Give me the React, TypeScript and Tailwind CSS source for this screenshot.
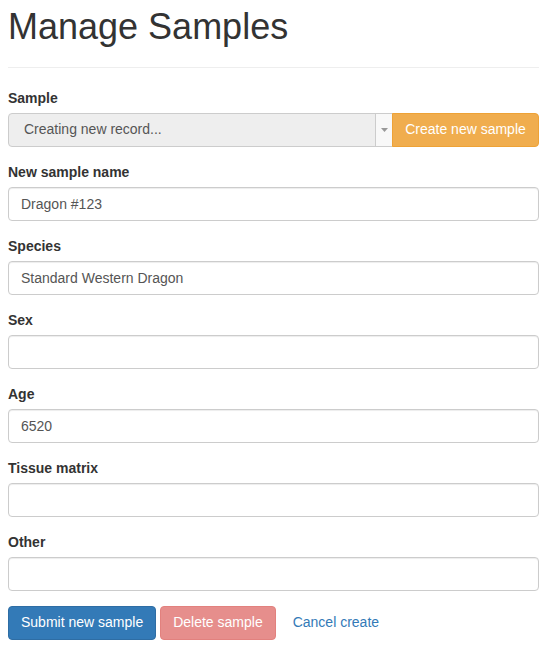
import React from "react";

const font = { fontFamily: '"Liberation Sans", Arial, sans-serif' };

function Field({ label, value }: { label: string; value: string }) {
  return (
    <div className="mb-[15px]">
      <label className="block mb-[5px] text-[14px] leading-[20px] font-bold text-[#333]">{label}</label>
      <input
        readOnly
        value={value}
        className="block w-full h-[34px] px-[12px] py-[6px] text-[14px] leading-[20px] text-[#555] bg-white border border-[#ccc] rounded-[4px] shadow-[inset_0_1px_1px_rgba(0,0,0,0.075)] outline-none"
        style={font}
      />
    </div>
  );
}

export default function App() {
  return (
    <div className="pl-2 pr-[9px] bg-white min-h-[648px]" style={font}>
      <div className="pb-[20px] border-b border-[#eee]">
        <h1 className="mt-[7px] text-[36px] leading-[1.1] font-medium text-[#333]">Manage Samples</h1>
      </div>
      <div className="mt-[20px]">
        <div className="mb-[15px]">
          <label className="block mb-[5px] text-[14px] leading-[20px] font-bold text-[#333]">Sample</label>
          <div className="flex h-[34px]">
            <div className="flex flex-1 min-w-0 bg-[#eee] border border-[#ccc] rounded-l-[4px]">
              <div className="flex-1 flex items-center pl-[15px] text-[14px] text-[#555]">Creating new record...</div>
              <div className="w-[17px] flex items-center justify-center border-l border-[#ccc] bg-[#f8f8f8]">
                <svg width="7" height="4" viewBox="0 0 7 4">
                  <path d="M0 0 L7 0 L3.5 4 Z" fill="#999" />
                </svg>
              </div>
            </div>
            <button className="w-[147px] -ml-px bg-[#f0ad4e] border border-[#eea236] rounded-r-[4px] text-white text-[14px]" style={font}>
              Create new sample
            </button>
          </div>
        </div>
        <Field label="New sample name" value="Dragon #123" />
        <Field label="Species" value="Standard Western Dragon" />
        <Field label="Sex" value="" />
        <Field label="Age" value="6520" />
        <Field label="Tissue matrix" value="" />
        <Field label="Other" value="" />
        <div className="flex items-center gap-[4px]">
          <button className="h-[34px] px-[12px] bg-[#337ab7] border border-[#2e6da4] rounded-[4px] text-white text-[14px]" style={font}>
            Submit new sample
          </button>
          <button className="h-[34px] px-[12px] bg-[#d9534f] border border-[#d43f3a] rounded-[4px] text-white text-[14px] opacity-65" style={font}>
            Delete sample
          </button>
          <button className="h-[34px] px-[12px] border border-transparent text-[#337ab7] text-[14px]" style={font}>
            Cancel create
          </button>
        </div>
      </div>
    </div>
  );
}
